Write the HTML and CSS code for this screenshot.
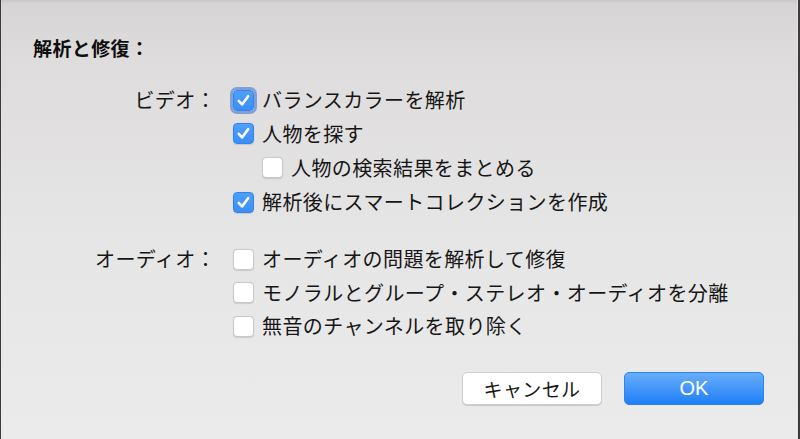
FILE: index.html
```html
<!DOCTYPE html>
<html lang="ja">
<head>
<meta charset="utf-8">
<title>解析と修復</title>
<link rel="stylesheet" href="styles.css">
</head>
<body>
<div class="window">
  <div class="dialog">
    <h1 class="title">解析と修復：</h1>

    <div class="group">
      <div class="label">ビデオ：</div>
      <div class="options">
        <label class="row"><span class="box checked focus"><svg viewBox="0 0 20 20"><path d="M5 10.4 L8.5 14.2 L14.9 5.4"/></svg></span>バランスカラーを解析</label>
        <label class="row"><span class="box checked"><svg viewBox="0 0 20 20"><path d="M5 10.4 L8.5 14.2 L14.9 5.4"/></svg></span>人物を探す</label>
        <label class="row sub"><span class="box"></span>人物の検索結果をまとめる</label>
        <label class="row"><span class="box checked"><svg viewBox="0 0 20 20"><path d="M5 10.4 L8.5 14.2 L14.9 5.4"/></svg></span>解析後にスマートコレクションを作成</label>
      </div>
    </div>

    <div class="group audio">
      <div class="label">オーディオ：</div>
      <div class="options">
        <label class="row"><span class="box"></span>オーディオの問題を解析して修復</label>
        <label class="row"><span class="box"></span>モノラルとグループ・ステレオ・オーディオを分離</label>
        <label class="row"><span class="box"></span>無音のチャンネルを取り除く</label>
      </div>
    </div>

    <div class="buttons">
      <button class="btn cancel">キャンセル</button>
      <button class="btn ok">OK</button>
    </div>
  </div>
</div>
</body>
</html>
```

FILE: styles.css
```css
html, body {
  margin: 0;
  padding: 0;
}
body {
  width: 800px;
  height: 439px;
  overflow: hidden;
  background: #3c3c3c;
  font-family: "Noto Sans CJK JP", "Noto Sans", sans-serif;
  color: #161616;
}
.window {
  width: 797px;
  height: 439px;
  margin-left: 1px;
  border-right: 1px solid #e4e2e2;
  box-sizing: border-box;
  background: linear-gradient(to bottom, #c9c7c7 0px, #d6d4d4 4px, #dedcdc 60px, #e7e6e6 250px, #ebebeb 439px);
}
.dialog {
  padding: 34px 33px 0 32px;
  box-sizing: border-box;
  height: 439px;
  display: flex;
  flex-direction: column;
}
.title {
  margin: 0;
  font-size: 19px;
  font-weight: 700;
  line-height: 28px;
  height: 28px;
  letter-spacing: 0.4px;
  color: #0e0e0e;
}
.group {
  display: grid;
  grid-template-columns: 183px auto;
  column-gap: 17px;
  margin-top: 21px;
  font-size: 20px;
  line-height: 34px;
  letter-spacing: 0.4px;
}
.group.audio {
  margin-top: 23px;
}
.label {
  text-align: right;
  height: 34px;
}
.options {
  display: flex;
  flex-direction: column;
}
.row {
  display: flex;
  align-items: center;
  height: 34px;
  white-space: nowrap;
}
.row:nth-child(2) {
  height: 33px;
}
.row.sub {
  padding-left: 29px;
  height: 35px;
}
.box {
  position: relative;
  width: 21px;
  height: 21px;
  margin-right: 8px;
  border-radius: 4px;
  box-sizing: border-box;
  background: #fff;
  border: 1px solid #c9c9c9;
  box-shadow: 0 0.5px 1px rgba(0,0,0,0.12);
  flex: none;
}
.box.checked {
  background: linear-gradient(to bottom, #4fa0f8, #3a8ef6);
  border: 1px solid #3184ee;
}
.box.focus {
  box-shadow: 0 0 0 3px rgba(96, 140, 210, 0.75);
}
.box svg {
  position: absolute;
  left: 0;
  top: 0;
  width: 19px;
  height: 19px;
}
.box svg path {
  fill: none;
  stroke: #fff;
  stroke-width: 2.7;
  stroke-linecap: round;
  stroke-linejoin: round;
}
.buttons {
  display: flex;
  justify-content: flex-end;
  gap: 22px;
  margin-top: 29px;
}
.btn {
  width: 140px;
  height: 33px;
  border-radius: 5px;
  font-family: "Noto Sans CJK JP", "Noto Sans", sans-serif;
  font-size: 19px;
  line-height: 31px;
  padding: 0;
  box-sizing: border-box;
  letter-spacing: 0.4px;
}
.cancel {
  background: #fff;
  color: #161616;
  border: 1px solid #cfcfcf;
  box-shadow: 0 1px 1px rgba(0,0,0,0.15);
}
.ok {
  background: linear-gradient(to bottom, #68adfa, #1f80f7);
  color: #fff;
  border: 1px solid #2b84f0;
  font-family: "Liberation Sans", "Noto Sans", sans-serif;
  font-size: 20px;
  letter-spacing: 0;
}
```
